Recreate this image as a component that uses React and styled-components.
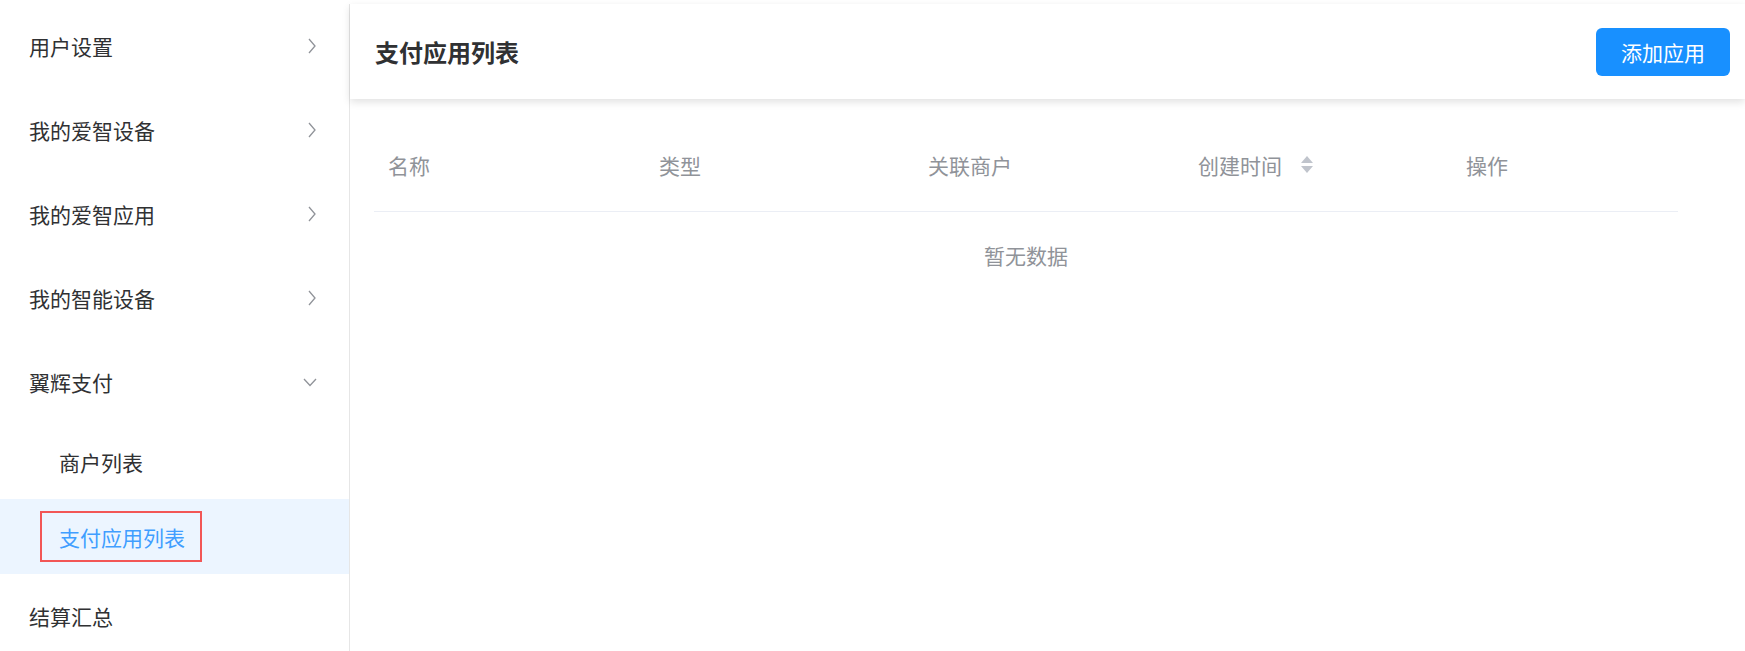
import React from "react"
import styled, { createGlobalStyle } from "styled-components"

const GlobalStyle = createGlobalStyle`
    html, body {
        margin: 0;
        padding: 0;
        background: #fff;
    }
    body {
        font-family: "Noto Sans CJK SC", "Noto Sans", sans-serif;
    }
    * {
        box-sizing: border-box;
    }
`

const Page = styled.div`
    display: flex;
    height: 651px;
    padding-top: 4px;
    overflow: hidden;
`

const Sidebar = styled.div`
    width: 350px;
    flex-shrink: 0;
    border-right: 1px solid #e6e6e6;
`

const MenuItem = styled.div`
    display: flex;
    align-items: center;
    justify-content: space-between;
    height: 84px;
    padding: 0 32px 0 29px;
    font-size: 21px;
    color: #303133;
`

const SubItem = styled.div`
    display: flex;
    align-items: center;
    height: 75px;
    padding-left: ${props => props.$marked ? "40px" : "59px"};
    font-size: 21px;
    color: ${props => props.$active ? "#409eff" : "#303133"};
    background: ${props => props.$active ? "#ecf5ff" : "transparent"};
`

const Marked = styled.span`
    display: flex;
    align-items: center;
    height: 51px;
    padding: 0 15px 0 17px;
    border: 2px solid #f25656;
`

const Main = styled.div`
    flex: 1;
    display: flex;
    flex-direction: column;
`

const Header = styled.div`
    display: flex;
    align-items: center;
    justify-content: space-between;
    height: 95px;
    padding: 0 15px 0 25px;
    background: #fff;
    box-shadow: 0 3px 8px rgba(0, 0, 0, 0.12);
    position: relative;
    z-index: 1;
`

const Title = styled.div`
    font-size: 24px;
    font-weight: 700;
    color: #303133;
`

const Button = styled.button`
    width: 134px;
    height: 48px;
    border: none;
    border-radius: 6px;
    background: #1890ff;
    color: #fff;
    font-family: inherit;
    font-size: 21px;
    padding: 0;
`

const Table = styled.div`
    margin: 23px 67px 0 24px;
`

const HeadRow = styled.div`
    display: grid;
    grid-template-columns: 271px 269px 270px 268px 226px;
    height: 90px;
    padding-bottom: 4px;
    align-items: center;
    border-bottom: 1px solid #ebeef5;
`

const HeadCell = styled.div`
    display: flex;
    align-items: center;
    padding-left: 14px;
    font-size: 21px;
    color: #909399;
`

const SortCaret = styled.span`
    display: flex;
    flex-direction: column;
    gap: 3px;
    margin-left: 19px;
`

const Empty = styled.div`
    display: flex;
    align-items: center;
    justify-content: center;
    height: 86px;
    font-size: 21px;
    color: #909399;
`

const ChevronRight = () => (
    <svg width="10" height="16" viewBox="0 0 10 16">
        <polyline points="2,1 8,8 2,15" fill="none" stroke="#909399" strokeWidth="1.3" />
    </svg>
)

const ChevronDown = () => (
    <svg width="14" height="9" viewBox="0 0 14 9">
        <polyline points="1,1 7,7.5 13,1" fill="none" stroke="#909399" strokeWidth="1.3" />
    </svg>
)

const menus = ["用户设置", "我的爱智设备", "我的爱智应用", "我的智能设备"]
const columns = ["名称", "类型", "关联商户", "创建时间", "操作"]

export default function App() {
    return (
        <>
            <GlobalStyle />
            <Page>
                <Sidebar>
                    {menus.map(name => (
                        <MenuItem key={name}>
                            {name}
                            <ChevronRight />
                        </MenuItem>
                    ))}
                    <MenuItem>
                        翼辉支付
                        <ChevronDown />
                    </MenuItem>
                    <SubItem>商户列表</SubItem>
                    <SubItem $active $marked>
                        <Marked>支付应用列表</Marked>
                    </SubItem>
                    <MenuItem>结算汇总</MenuItem>
                </Sidebar>
                <Main>
                    <Header>
                        <Title>支付应用列表</Title>
                        <Button>添加应用</Button>
                    </Header>
                    <Table>
                        <HeadRow>
                            {columns.map(col => (
                                <HeadCell key={col}>
                                    {col}
                                    {col === "创建时间" && (
                                        <SortCaret>
                                            <svg width="12" height="7" viewBox="0 0 12 7"><polygon points="6,0 12,7 0,7" fill="#c0c4cc" /></svg>
                                            <svg width="12" height="7" viewBox="0 0 12 7"><polygon points="0,0 12,0 6,7" fill="#c0c4cc" /></svg>
                                        </SortCaret>
                                    )}
                                </HeadCell>
                            ))}
                        </HeadRow>
                        <Empty>暂无数据</Empty>
                    </Table>
                </Main>
            </Page>
        </>
    )
}
